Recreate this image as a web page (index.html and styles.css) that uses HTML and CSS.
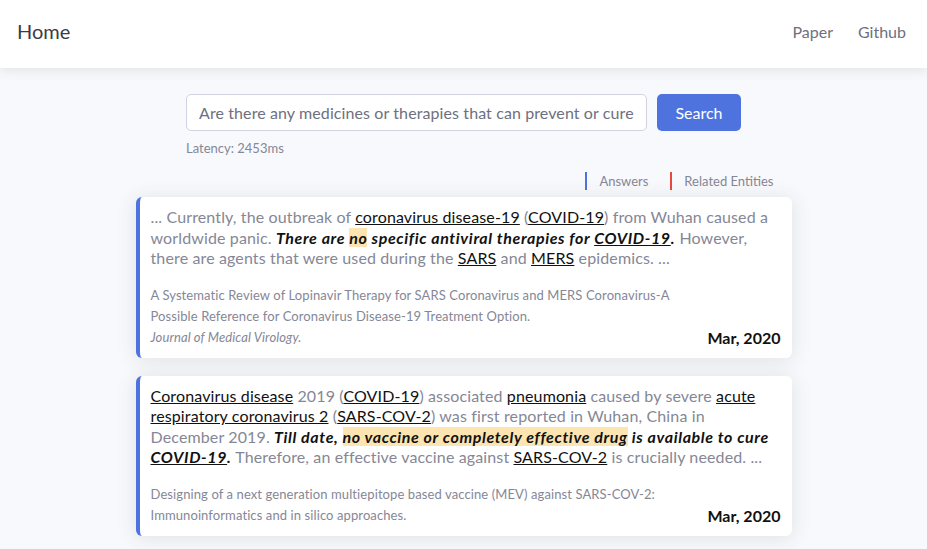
FILE: index.html
```html
<!DOCTYPE html>
<html>
<head>
<meta charset="utf-8">
<link rel="stylesheet" href="styles.css">
</head>
<body>
<nav class="navbar">
  <a class="brand">Home</a>
  <div class="nav-links">
    <a class="nav-link">Paper</a>
    <a class="nav-link">Github</a>
  </div>
</nav>
<main class="container">
  <div class="search-area">
    <div class="search-row">
      <input class="search-input" type="text" value="Are there any medicines or therapies that can prevent or cure COVID-19?">
      <button class="search-btn">Search</button>
    </div>
    <div class="latency">Latency: 2453ms</div>
  </div>
  <div class="legend">
    <span class="legend-item answers">Answers</span>
    <span class="legend-item entities">Related Entities</span>
  </div>
  <div class="results">
    <div class="card">
      <p class="snippet">... Currently, the outbreak of <span class="ent">coronavirus disease-19</span> (<span class="ent">COVID-19</span>) from Wuhan caused a worldwide panic. <b class="ans">There are <span class="hl">no</span> specific antiviral therapies for <span class="ent">COVID-19</span>.</b> However, there are agents that were used during the <span class="ent">SARS</span> and <span class="ent">MERS</span> epidemics. ...</p>
      <div class="meta">
        <div class="source">
          <div class="title">A Systematic Review of Lopinavir Therapy for SARS Coronavirus and MERS Coronavirus-A Possible Reference for Coronavirus Disease-19 Treatment Option.</div>
          <div class="journal">Journal of Medical Virology.</div>
        </div>
        <div class="date">Mar, 2020</div>
      </div>
    </div>
    <div class="card">
      <p class="snippet"><span class="ent">Coronavirus disease</span> 2019 (<span class="ent">COVID-19</span>) associated <span class="ent">pneumonia</span> caused by severe <span class="ent">acute respiratory coronavirus 2</span> (<span class="ent">SARS-COV-2</span>) was first reported in Wuhan, China in December 2019. <b class="ans">Till date, <span class="hl">no vaccine or completely effective drug</span> is available to cure <span class="ent">COVID-19</span>.</b> Therefore, an effective vaccine against <span class="ent">SARS-COV-2</span> is crucially needed. ...</p>
      <div class="meta">
        <div class="source">
          <div class="title">Designing of a next generation multiepitope based vaccine (MEV) against SARS-COV-2: Immunoinformatics and in silico approaches.</div>
        </div>
        <div class="date">Mar, 2020</div>
      </div>
    </div>
  </div>
</main>
</body>
</html>
```
FILE: styles.css
```css
html, body {
  margin: 0;
  padding: 0;
}
body {
  background: #f8f9fc;
  font-family: Lato, "Open Sans", sans-serif;
  color: #858796;
  overflow: hidden;
}
.navbar {
  height: 68px;
  background: #fff;
  box-shadow: 0 2px 12px rgba(58, 59, 69, 0.12);
  display: flex;
  align-items: center;
  justify-content: space-between;
  padding: 0 21px 0 17px;
  box-sizing: border-box;
  position: relative;
}
.brand {
  font-size: 20px;
  color: #3a3b45;
  margin-top: -6px;
}
.nav-links {
  display: flex;
  gap: 25px;
  margin-top: -6px;
}
.nav-link {
  font-size: 16px;
  color: #6e707e;
}
.container {
  width: 656px;
  margin: 0 auto;
  padding-top: 26px;
  padding-bottom: 40px;
}
.search-area {
  width: 555px;
  margin: 0 auto;
}
.search-row {
  display: flex;
  gap: 10px;
}
.search-input {
  flex: 1;
  height: 37px;
  box-sizing: border-box;
  border: 1px solid #d1d3e2;
  border-radius: 5px;
  padding: 0 12px;
  font-family: inherit;
  font-size: 16px;
  letter-spacing: 0.1px;
  color: #6e707e;
  background: #fff;
  outline: none;
}
.search-btn {
  width: 84px;
  height: 37px;
  border: none;
  border-radius: 5px;
  background: #4e73df;
  color: #fff;
  font-family: inherit;
  font-size: 16px;
}
.latency {
  font-size: 13px;
  margin-top: 9px;
  color: #858796;
}
.legend {
  display: flex;
  justify-content: flex-end;
  gap: 22px;
  padding-right: 18px;
  margin-top: 16px;
  font-size: 13px;
}
.legend-item {
  border-left: 2px solid;
  padding-left: 12px;
  line-height: 18px;
}
.answers { border-color: #4e73df; }
.entities { border-color: #e74a3b; }
.results {
  margin-top: 7px;
  display: flex;
  flex-direction: column;
  gap: 18px;
}
.card {
  background: #fff;
  border-left: 4px solid #4e73df;
  border-radius: 6px;
  box-shadow: 0 2px 20px rgba(58, 59, 69, 0.13);
  padding: 10px 11px 10px 11px;
}
.snippet {
  margin: 0;
  font-size: 16px;
  line-height: 20.5px;
  letter-spacing: 0.13px;
}
.ent {
  color: #111;
  text-decoration: underline;
}
.ans {
  color: #111;
  font-style: italic;
  font-weight: 700;
  letter-spacing: 0.62px;
}
.hl {
  background: #fce5b1;
}
.meta {
  display: flex;
  align-items: flex-end;
  justify-content: space-between;
  margin-top: 16px;
}
.source {
  width: 525px;
  font-size: 13px;
  line-height: 21px;
  letter-spacing: 0.1px;
}
.journal {
  font-style: italic;
}
.date {
  font-size: 16px;
  font-weight: 700;
  color: #111;
  line-height: 21px;
}
```
